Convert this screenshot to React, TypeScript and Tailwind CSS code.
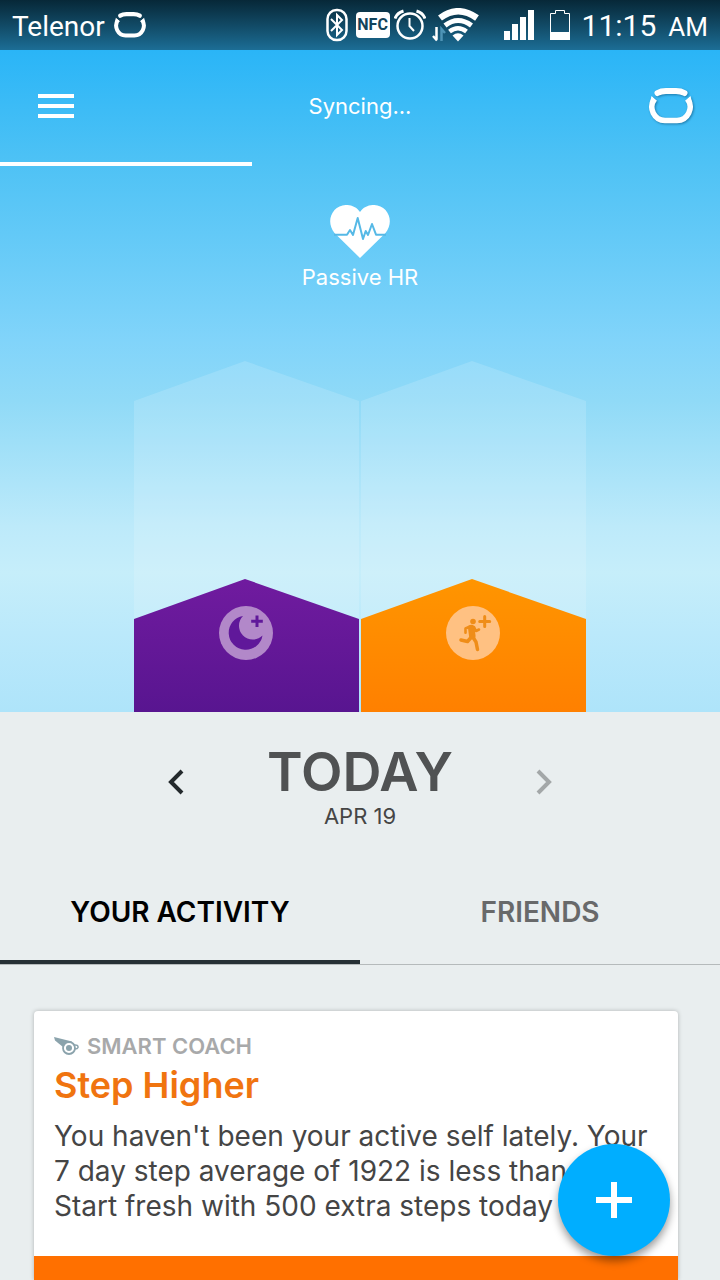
import React, { useState } from 'react';

type IconProps = { className?: string };

const BandIcon: React.FC<IconProps> = ({ className }) => (
  <svg viewBox="0 0 46 36" fill="none" stroke="currentColor" className={className} aria-hidden="true">
    <path d="M9.5 5Q13 3 18 3H28Q33 3 36.5 5" strokeWidth="6" strokeLinecap="round" />
    <path d="M6.5 11A13.500 13.500 0 0 0 17 32.500H29A13.500 13.500 0 0 0 39.500 11" strokeWidth="5.500" />
    <path d="M2 14L3.500 8L9 13ZM44 14L42.500 8L37 13Z" fill="currentColor" stroke="none" />
  </svg>
);

const BluetoothIcon = () => (
  <svg viewBox="0 0 22 34" fill="none" stroke="currentColor" className="h-[34px] w-[22px]" aria-hidden="true">
    <rect x="1.500" y="2" width="19" height="30" rx="9" strokeWidth="2.500" />
    <path d="M5 11L16 22L11 27V7L16 12L5 23" strokeWidth="2" />
  </svg>
);

const AlarmIcon = () => (
  <svg viewBox="0 0 32 32" fill="none" stroke="currentColor" className="h-8 w-8" aria-hidden="true">
    <circle cx="16" cy="17" r="12.500" strokeWidth="2.500" />
    <path d="M15.500 9V17L20 22" strokeWidth="2" />
    <path d="M1 9.500Q3 4 9.500 2M31 9.500Q29 4 22.500 2" strokeWidth="3" />
  </svg>
);

const WifiIcon = () => (
  <svg viewBox="0 0 48 34" fill="none" stroke="currentColor" className="h-[34px] w-12" aria-hidden="true">
    <path d="M8 10Q26 -3.500 45 10" strokeWidth="6.500" />
    <path d="M13 17.500Q26 7.500 39.500 17.500" strokeWidth="5" />
    <path d="M17.500 23.500Q26 17 34.500 23.500" strokeWidth="4.500" />
    <path d="M20.500 27.500Q26 23 31.500 27.500L26 33.500Z" fill="currentColor" stroke="none" />
    <path d="M4.500 19V31M1 28L5 32.500" strokeWidth="2.500" />
    <path d="M9.500 33V21L13 25" stroke="#4d93b5" strokeWidth="2.500" />
  </svg>
);

const SignalIcon = () => (
  <svg viewBox="0 0 30 30" fill="currentColor" className="h-[30px] w-[30px]" aria-hidden="true">
    <path d="M0 21H6V30H0ZM8 14H14V30H8ZM16 7H22V30H16ZM24 0H30V30H24Z" />
  </svg>
);

const BatteryIcon = () => (
  <svg viewBox="0 0 20 30" className="h-[30px] w-5" aria-hidden="true">
    <path d="M.5 29.500V3.500H5.500V.5H14.500V3.500H19.500V29.500Z" fill="none" stroke="currentColor" />
    <path d="M0 22H20V30H0Z" fill="currentColor" />
  </svg>
);

const HeartIcon = () => (
  <svg viewBox="0 0 60 53" fill="none" className="h-[53px] w-[60px]" aria-hidden="true">
    <path
      d="M30 7C24 -2 11 -2 4.500 5C-1.500 12 -1 21 4.500 28L30 53L55.500 28C61 21 61.500 12 55.500 5C49 -2 36 -2 30 7Z"
      fill="white"
    />
    <path
      d="M4 29.700H17L20 25L23 30L27.700 13L33 34L35.700 26L38 30L42 19L46 29.700H56"
      stroke="#56b9e6"
      strokeWidth="2"
      strokeLinejoin="round"
    />
  </svg>
);

const WhistleIcon = () => (
  <svg viewBox="0 0 25 18" fill="none" stroke="#8ba3ac" className="h-[18px] w-[25px]" aria-hidden="true">
    <path d="M0 0L18 4.500L9 10L1 3.500Z" fill="#8ba3ac" stroke="none" />
    <circle cx="15" cy="11" r="6" fill="white" strokeWidth="1.800" />
    <circle cx="15" cy="11" r="3" fill="#8ba3ac" stroke="none" />
    <path d="M20 8Q24.500 7.500 24 10.500Q23.500 12 21 12" strokeWidth="1.500" />
  </svg>
);

const SleepBadge = () => (
  <g>
    <circle cx="112" cy="272" r="27" fill="#b288c9" />
    <path d="M109 255A17 17 0 1 0 128.500 274.500A13.500 13.500 0 0 1 109 255Z" fill="#60189a" />
    <path d="M123 254.500V266M117.200 260.300H128.800" stroke="#60189a" strokeWidth="3" />
  </g>
);

const StepsBadge = () => (
  <g fill="none" stroke="#ef8d18" strokeLinecap="round" strokeLinejoin="round">
    <circle cx="112" cy="272" r="27" fill="#ffc182" stroke="none" />
    <circle cx="112" cy="260.500" r="2.800" fill="#ef8d18" stroke="none" />
    <path d="M110.300 267L111.300 275" strokeWidth="6.500" />
    <path d="M109 265.500L104.500 267.500V271.700M113 266L115 270L118 268.500" strokeWidth="2.600" />
    <path d="M111.500 275.500L115 281L116.500 288.500M110 276.500L106.500 280.500L100 279" strokeWidth="3.500" />
    <path d="M123.700 255.500V265.500M118.700 260.500H128.700" strokeWidth="3" />
  </g>
);

type GoalBarProps = {
  id: string;
  label: string;
  from: string;
  to: string;
  children: React.ReactNode;
};

const GoalBar: React.FC<GoalBarProps> = ({ id, label, from, to, children }) => (
  <svg viewBox="0 0 225 351" className="h-[351px] w-[225px]" role="img" aria-label={label}>
    <defs>
      <linearGradient id={id} x1="0" y1="0" x2="0" y2="1">
        <stop offset="0" stopColor={from} />
        <stop offset="1" stopColor={to} />
      </linearGradient>
    </defs>
    <path d="M0 40L111 0L225 40V351H0Z" fill="white" fillOpacity="0.150" />
    <path d="M0 258L111 218L225 258V351H0Z" fill={`url(#${id})`} />
    {children}
  </svg>
);

const tabs = ['YOUR ACTIVITY', 'FRIENDS'];

const App: React.FC = () => {
  const [activeTab, setActiveTab] = useState(tabs[0]);

  return (
    <div className="flex min-h-screen flex-col bg-[#e9eeef] font-['Inter',sans-serif] text-[#454545]">
      <div className="flex h-[50px] items-center justify-between bg-linear-to-b from-[#072838] to-[#1c6e96] px-3 font-['Roboto',sans-serif] text-white">
        <div className="flex items-center gap-2">
          <span className="pt-1 text-[28px]">Telenor</span>
          <BandIcon className="h-[26px] w-[34px]" />
        </div>
        <div className="flex items-center">
          <BluetoothIcon />
          <span className="ml-2 flex h-[26px] w-[34px] items-center justify-center rounded-sm bg-white text-[16px] font-bold text-[#12445c]">
            NFC
          </span>
          <span className="ml-1"><AlarmIcon /></span>
          <span className="ml-1.5"><WifiIcon /></span>
          <span className="ml-6"><SignalIcon /></span>
          <span className="ml-4"><BatteryIcon /></span>
          <span className="ml-3 flex items-baseline gap-3 text-[30px]">
            11:15 <span className="text-[26px]">AM</span>
          </span>
        </div>
      </div>

      <div className="flex flex-col bg-[linear-gradient(to_bottom,#2ab5f7_0%,#4ec2f5_17%,#81d4fa_44%,#90daf7_53%,#bdeafa_72%,#c6eefa_79%,#bbe9fb_88%,#aee4fa_100%)] text-white">
        <header className="grid h-28 grid-cols-3 items-center px-[26px]">
          <button type="button" aria-label="Menu" className="ml-3 flex w-9 flex-col gap-1.5">
            <span className="h-1 w-full bg-white" />
            <span className="h-1 w-full bg-white" />
            <span className="h-1 w-full bg-white" />
          </button>
          <span className="text-center text-[22px]">Syncing...</span>
          <button type="button" aria-label="Band" className="justify-self-end">
            <BandIcon className="h-9 w-[46px] drop-shadow-[1px_1px_1px_rgba(0,60,100,0.5)]" />
          </button>
        </header>
        <div className="h-1 w-[35%] bg-white" />

        <div className="flex flex-col items-center gap-1 pt-[39px]">
          <HeartIcon />
          <span className="text-[22px] leading-[30px]">Passive HR</span>
        </div>

        <div className="mt-[69px] flex justify-center gap-0.5">
          <GoalBar id="sleep-fill" label="Sleep" from="#701b9f" to="#581590">
            <SleepBadge />
          </GoalBar>
          <GoalBar id="steps-fill" label="Steps" from="#ff9500" to="#ff8000">
            <StepsBadge />
          </GoalBar>
        </div>
      </div>

      <div className="flex items-start justify-center gap-[74px] pt-8">
        <button type="button" aria-label="Previous day" className="mt-6 text-[#23292c]">
          <svg viewBox="0 0 24 28" fill="none" stroke="currentColor" strokeWidth="4" className="h-7 w-6" aria-hidden="true">
            <path d="M18 3L7 14L18 25" />
          </svg>
        </button>
        <div className="flex w-[196px] flex-col items-center whitespace-nowrap">
          <h1 className="text-[54px] leading-[56px] font-semibold text-[#505253]">TODAY</h1>
          <p className="text-[22px] leading-8">APR 19</p>
        </div>
        <button type="button" aria-label="Next day" className="mt-6 text-[#a3a7a8]">
          <svg viewBox="0 0 24 28" fill="none" stroke="currentColor" strokeWidth="4" className="h-7 w-6" aria-hidden="true">
            <path d="M6 3L17 14L6 25" />
          </svg>
        </button>
      </div>

      <div role="tablist" className="mt-[27px] grid grid-cols-2 border-b border-[#b5babb]">
        {tabs.map((tab) => (
          <button
            key={tab}
            type="button"
            role="tab"
            aria-selected={tab === activeTab}
            onClick={() => setActiveTab(tab)}
            className={
              tab === activeTab
                ? 'h-[105px] border-b-4 border-[#263035] pt-1 text-[28px] font-semibold text-black'
                : 'h-[105px] border-b-4 border-transparent pt-1 text-[28px] font-semibold text-[#68696a]'
            }
          >
            {tab}
          </button>
        ))}
      </div>

      <article className="mt-[46px] mr-[42px] ml-[34px] flex flex-1 flex-col rounded-t-sm bg-white shadow-[0_0_4px_rgba(0,0,0,0.25)]">
        <div className="px-5 pt-5 pb-8">
          <div className="flex items-center gap-2 text-[22px] leading-[30px] font-semibold text-[#a8a9aa]">
            <WhistleIcon />
            SMART COACH
          </div>
          <h2 className="text-[36px] leading-[48px] font-semibold text-[#f07410]">Step Higher</h2>
          <p className="mt-2.5 text-[28px] leading-[35px] whitespace-nowrap">
            You haven't been your active self lately. Your
            <br />
            7 day step average of 1922 is less than
            <br />
            Start fresh with 500 extra steps today
          </p>
        </div>
        <div className="min-h-6 flex-1 bg-[#ff7000]" />
      </article>

      <button
        type="button"
        aria-label="Add"
        className="fixed right-[50px] bottom-6 flex h-28 w-28 items-center justify-center rounded-full bg-[#00aeff] text-white shadow-[0_5px_8px_rgba(0,0,0,0.4)]"
      >
        <svg viewBox="0 0 36 36" fill="none" stroke="currentColor" strokeWidth="6" className="h-9 w-9" aria-hidden="true">
          <path d="M18 0V36M0 18H36" />
        </svg>
      </button>
    </div>
  );
};

export default App;
